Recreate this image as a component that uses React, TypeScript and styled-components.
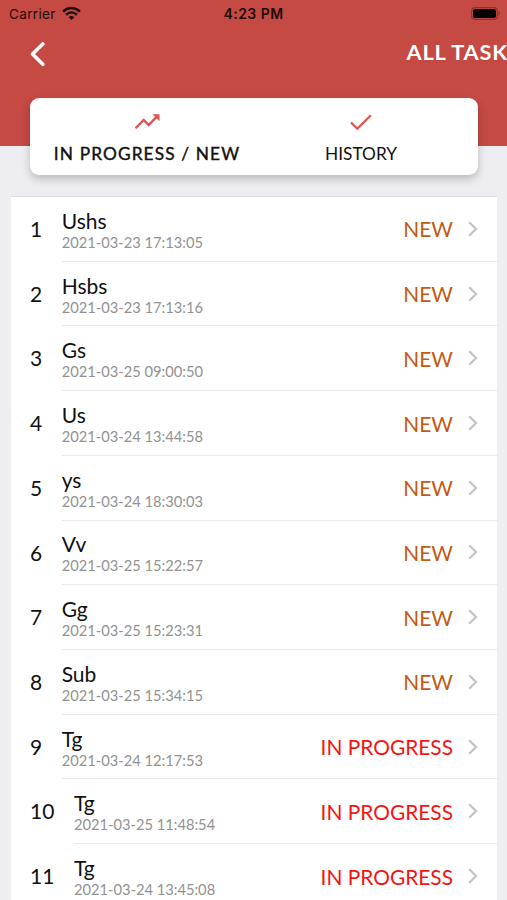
import React from 'react';
import styled, { createGlobalStyle } from 'styled-components';

const GlobalStyle = createGlobalStyle`
  * { box-sizing: border-box; }
  body {
    margin: 0;
    background: #eeedf2;
    font-family: Lato, 'Liberation Sans', sans-serif;
    color: #111;
    overflow: hidden;
  }
`;

const Screen = styled.main`
  height: 900px;
  overflow: hidden;
  background: #eeedf2;
`;

const Header = styled.header`
  height: 146px;
  overflow: hidden;
  background: #c44a43;
`;

const StatusBar = styled.div`
  display: grid;
  grid-template-columns: 1fr auto 1fr;
  align-items: center;
  height: 27px;
  padding: 1px 6px 0 9px;
  font-family: Inter, 'Liberation Sans', sans-serif;
  font-size: 13.5px;
  line-height: 26px;
  color: #1f0b0a;
`;

const Carrier = styled.div`
  display: flex;
  align-items: center;
  gap: 6px;
  letter-spacing: 0.35px;

  svg { margin-bottom: 2px; }
`;

const Clock = styled.div`
  margin-left: -3px;
  font-weight: 600;
  font-size: 14px;
  letter-spacing: 0.45px;
`;

const BatterySlot = styled.div`
  display: flex;
  justify-content: flex-end;
`;

const NavBar = styled.div`
  display: flex;
  align-items: center;
  justify-content: space-between;
  height: 53px;
  padding-left: 30px;
`;

const Title = styled.h1`
  flex: none;
  width: 100.5px;
  margin: 0;
  padding-bottom: 4px;
  font-size: 21.8px;
  font-weight: 700;
  line-height: 26px;
  letter-spacing: 0.75px;
  white-space: nowrap;
  color: #fff;
`;

const TabCard = styled.nav`
  position: relative;
  display: grid;
  grid-template-columns: 234px 1fr;
  height: 77.5px;
  margin: -48.5px 29px 0 30px;
  padding-right: 20px;
  border-radius: 9px;
  background: #fff;
  box-shadow: 0 4px 8px rgba(0, 0, 0, 0.22);
`;

const Tab = styled.div<{ $active?: boolean }>`
  display: flex;
  flex-direction: column;
  align-items: center;
  padding-top: 12.5px;
  font-size: 17.3px;
  line-height: 22px;
  letter-spacing: ${(p) => (p.$active ? '1.12px' : '0')};
  -webkit-text-stroke: ${(p) => (p.$active ? '0.4px currentColor' : '0')};
  white-space: nowrap;

  svg { flex: none; margin-bottom: 9px; }
`;

const List = styled.section`
  margin: 21px 10px 0 11px;
  border-top: 1px solid #dddde0;
  background: #fff;
`;

const Row = styled.div`
  display: flex;
  height: 64.73px;
  padding-left: 19px;
  font-size: 21px;
`;

const Index = styled.div`
  flex: none;
  margin-right: 19.5px;
  line-height: 64.7px;
`;

const Body = styled.div`
  display: flex;
  flex: 1;
  align-items: center;
  justify-content: space-between;
  padding-right: 19px;
  border-bottom: 1px solid #e9e9eb;
`;

const Summary = styled.div`
  padding-top: 2px;
`;

const Name = styled.div`
  line-height: 24px;
`;

const Stamp = styled.div`
  font-size: 14.7px;
  line-height: 18px;
  color: #929292;
`;

const Status = styled.div<{ $fresh: boolean }>`
  display: flex;
  align-items: center;
  gap: 15px;
  font-size: 20.9px;
  color: ${(p) => (p.$fresh ? '#c25a12' : '#f51414')};
`;

const tasks = [
  ['Ushs', '2021-03-23 17:13:05'],
  ['Hsbs', '2021-03-23 17:13:16'],
  ['Gs', '2021-03-25 09:00:50'],
  ['Us', '2021-03-24 13:44:58'],
  ['ys', '2021-03-24 18:30:03'],
  ['Vv', '2021-03-25 15:22:57'],
  ['Gg', '2021-03-25 15:23:31'],
  ['Sub', '2021-03-25 15:34:15'],
  ['Tg', '2021-03-24 12:17:53'],
  ['Tg', '2021-03-25 11:48:54'],
  ['Tg', '2021-03-24 13:45:08'],
];

const WifiIcon = () => (
  <svg width="19" height="15" viewBox="0 0 18 14" fill="none" stroke="#1f0b0a" strokeWidth="2.5">
    <path d="M1 5.2C5.6.7 12.4.7 17 5.2" />
    <path d="M3.9 8.1c3-2.8 7.2-2.8 10.2 0" />
    <path d="M6.3 10.5c1.6-1.4 3.8-1.4 5.4 0L9 13.2z" fill="#1f0b0a" stroke="none" />
  </svg>
);

const BatteryIcon = () => (
  <svg width="30" height="14" viewBox="0 0 30 14">
    <rect x="0.7" y="0.7" width="25.6" height="11.6" rx="3.4" fill="none" stroke="#8b332e" strokeWidth="1.2" />
    <rect x="2" y="2" width="23" height="9" rx="2" fill="#070000" />
    <path d="M27.6 4.3c1.9.8 1.9 3.3 0 4.1z" fill="#8b332e" />
  </svg>
);

const BackIcon = () => (
  <svg width="16" height="26" viewBox="0 0 16 26" fill="none" stroke="#fff" strokeWidth="3.6" strokeLinecap="round" strokeLinejoin="round">
    <path d="M12.8 3L2.5 13l10.3 10.3" />
  </svg>
);

const TrendIcon = () => (
  <svg width="26" height="24" viewBox="0 0 26 24" fill="none" stroke="#e3534c" strokeWidth="2.3">
    <path d="M1.5 18.2L9.7 10l5 5L23 6.4" />
    <path d="M18.5 4.3h7v7z" fill="#e3534c" stroke="none" />
  </svg>
);

const CheckIcon = () => (
  <svg width="22" height="24" viewBox="0 0 22 24" fill="none" stroke="#e3534c" strokeWidth="2.3">
    <path d="M1 12.5l6.3 6.2L20.9 5.2" />
  </svg>
);

const ChevronIcon = () => (
  <svg width="10" height="16" viewBox="0 0 10 16" fill="none" stroke="#c5c5c8" strokeWidth="2.3">
    <path d="M1.2 1.2L8 8l-6.8 6.8" />
  </svg>
);

export default function App() {
  return (
    <Screen>
      <GlobalStyle />
      <Header>
        <StatusBar>
          <Carrier>Carrier <WifiIcon /></Carrier>
          <Clock>4:23 PM</Clock>
          <BatterySlot><BatteryIcon /></BatterySlot>
        </StatusBar>
        <NavBar>
          <BackIcon />
          <Title>ALL TASK</Title>
        </NavBar>
      </Header>
      <TabCard>
        <Tab $active><TrendIcon />IN PROGRESS / NEW</Tab>
        <Tab><CheckIcon />HISTORY</Tab>
      </TabCard>
      <List>
        {tasks.map(([name, stamp], i) => (
          <Row key={stamp}>
            <Index>{i + 1}</Index>
            <Body>
              <Summary>
                <Name>{name}</Name>
                <Stamp>{stamp}</Stamp>
              </Summary>
              <Status $fresh={i < 8}>
                {i < 8 ? 'NEW' : 'IN PROGRESS'}
                <ChevronIcon />
              </Status>
            </Body>
          </Row>
        ))}
      </List>
    </Screen>
  );
}
